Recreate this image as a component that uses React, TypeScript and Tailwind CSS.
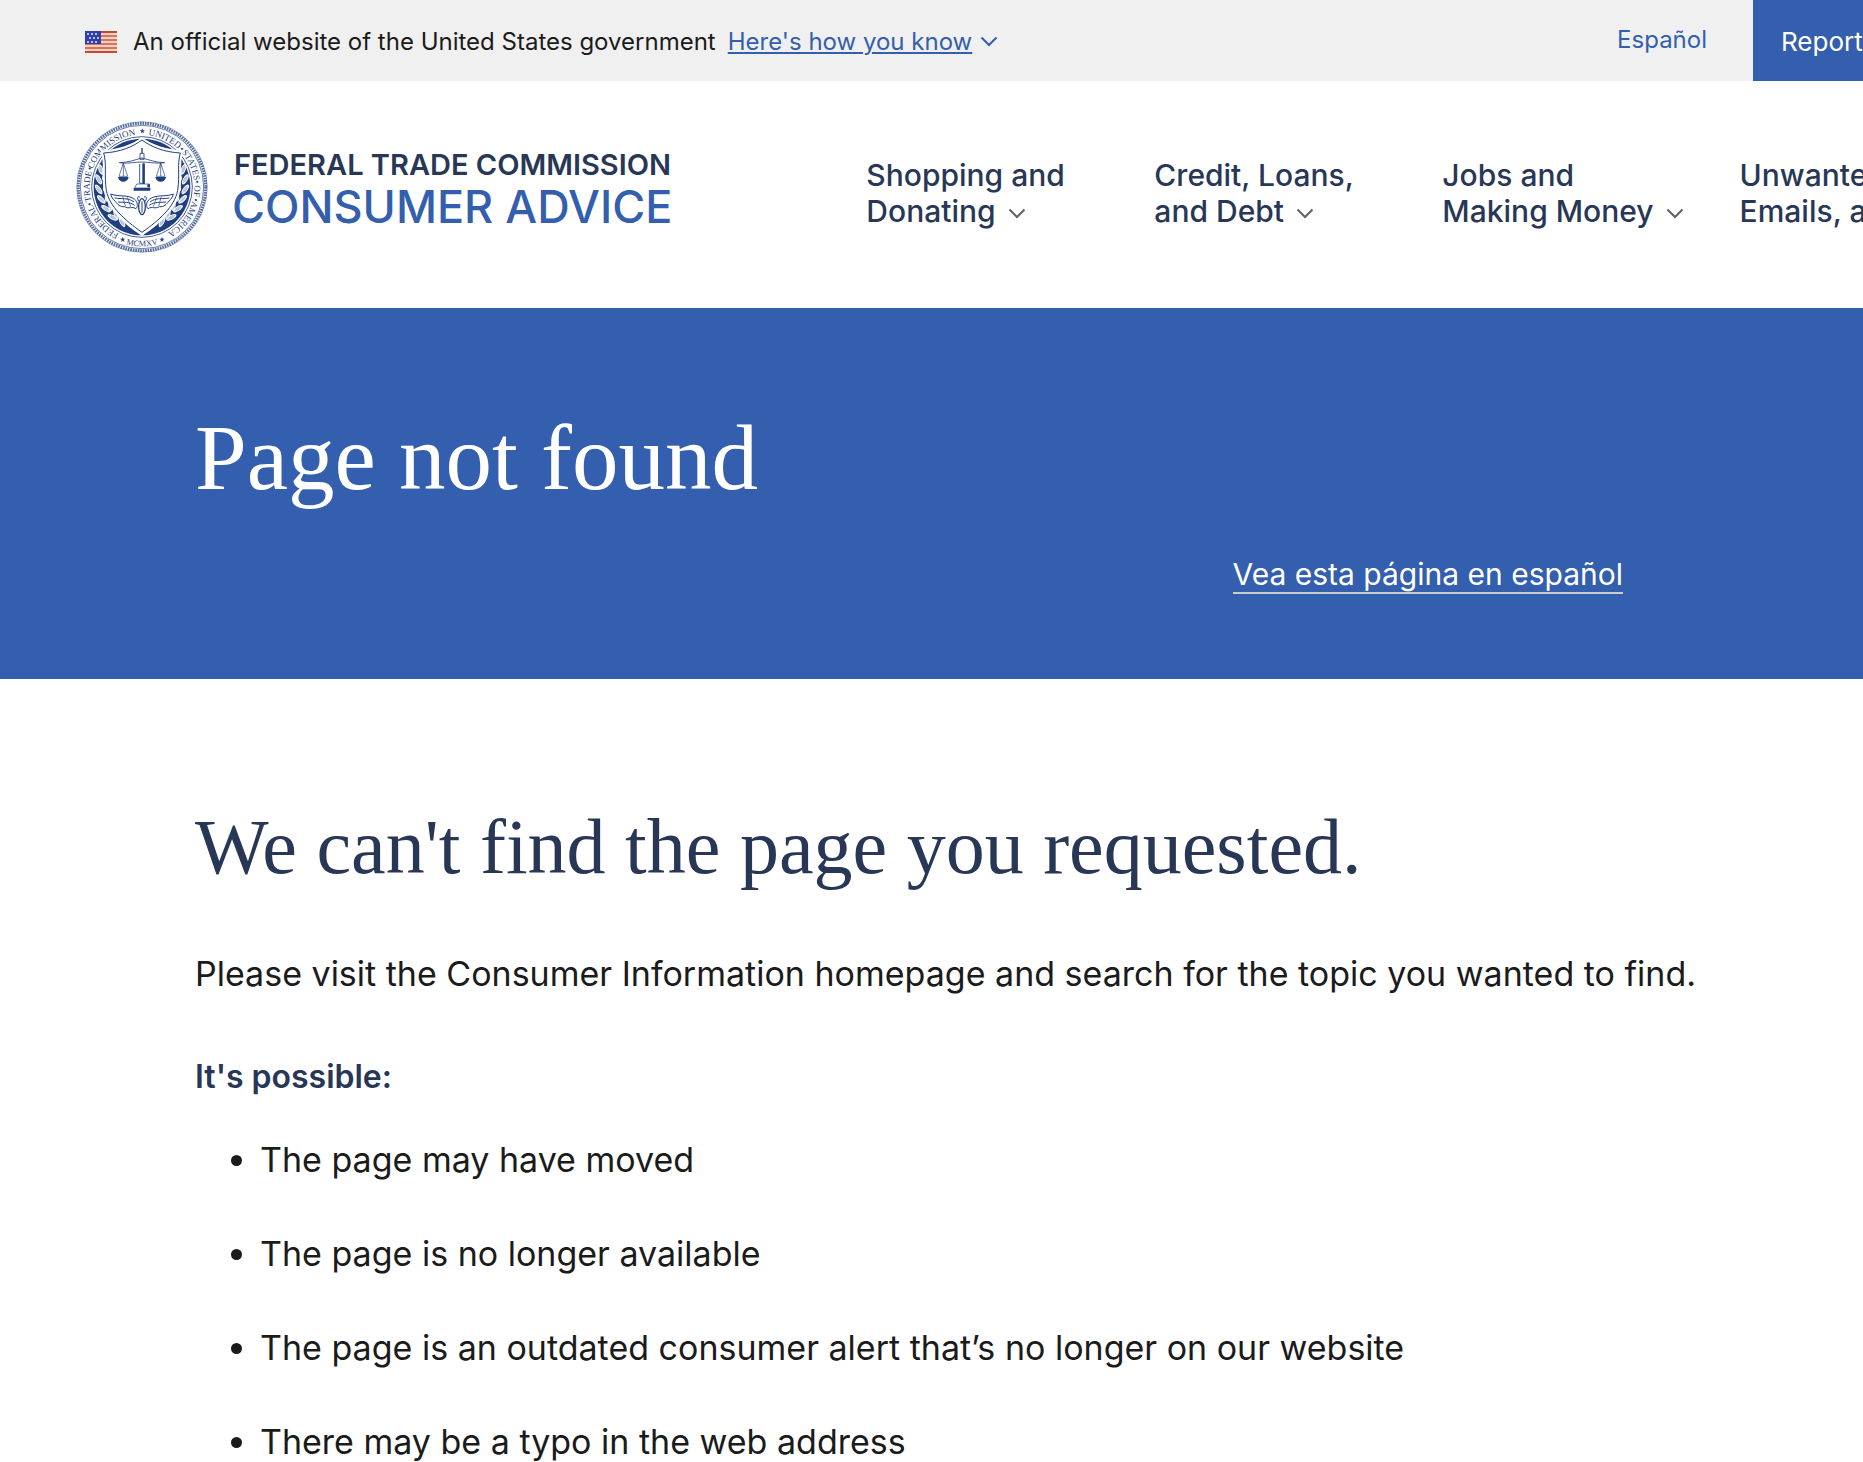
import React from "react";

const navy = "#1f3f7f";

const ringWords = [
  { text: "FEDERAL", at: "13.4%" },
  { text: "•", at: "20%" },
  { text: "TRADE", at: "25.2%" },
  { text: "•", at: "30.4%" },
  { text: "COMMISSION", at: "39.3%" },
  { text: "UNITED", at: "57%" },
  { text: "•", at: "62.9%" },
  { text: "STATES", at: "68.3%" },
  { text: "•", at: "73.5%" },
  { text: "OF", at: "76.2%" },
  { text: "•", at: "78.8%" },
  { text: "AMERICA", at: "85.6%" },
];

const leaves = [
  [92, 172, -20],
  [106, 190, 28],
  [86, 202, -30],
  [108, 222, 22],
  [86, 232, -36],
  [112, 252, 12],
  [94, 262, -46],
  [122, 280, -4],
  [108, 290, -56],
  [138, 306, -16],
  [128, 316, -62],
  [156, 330, -28],
];

function Star({ x, y }: { x: number; y: number }) {
  return (
    <path
      transform={`translate(${x} ${y})`}
      d="M0 -8L2 -2.5L8 -2.5L3 1.2L5 7L0 3.5L-5 7L-3 1.2L-8 -2.5L-2 -2.5Z"
      fill={navy}
    />
  );
}

function Laurel() {
  return (
    <g>
      {leaves.map(([x, y, r]) => (
        <g key={`${x}-${y}`} transform={`translate(${x} ${y}) rotate(${r})`}>
          <ellipse rx="7" ry="17" fill="#fff" />
          <path d="M0 -13V14M-3 -8V8M3 -8V8" stroke={navy} strokeWidth="1" />
        </g>
      ))}
      <circle cx="103" cy="146" r="3" fill="#fff" />
      <circle cx="92" cy="150" r="2" fill="#fff" />
    </g>
  );
}

function Seal() {
  return (
    <svg viewBox="18 27 396 396" className="size-33 shrink-0" role="img" aria-label="Federal Trade Commission seal">
      <defs>
        <path id="ring" d="M216 382A157 157 0 0 1 216 68A157 157 0 0 1 216 382" />
        <path id="ring-bottom" d="M38 225A178 178 0 0 0 394 225" />
      </defs>
      <circle cx="216" cy="225" r="191" fill="none" stroke={navy} strokeWidth="9" strokeDasharray="5 2.5" opacity="0.75" />
      <circle cx="216" cy="225" r="196" fill="none" stroke={navy} strokeWidth="1.5" opacity="0.7" />
      <circle cx="216" cy="225" r="185" fill="none" stroke={navy} strokeWidth="2" />
      <circle cx="216" cy="225" r="151" fill="#fff" stroke={navy} strokeWidth="2.5" />
      <circle cx="216" cy="225" r="145" fill={navy} />
      <g fill={navy} fontFamily="Liberation Serif, serif" fontSize="27" textAnchor="middle">
        {ringWords.map((w) => (
          <text key={w.at}>
            <textPath href="#ring" startOffset={w.at}>{w.text}</textPath>
          </text>
        ))}
        <text fontSize="25">
          <textPath href="#ring-bottom" startOffset="50%">MCMXV</textPath>
        </text>
      </g>
      <Star x={217} y={57} />
      <Star x={158} y={383} />
      <Star x={276} y={383} />
      <Laurel />
      <g transform="translate(432 0) scale(-1 1)">
        <Laurel />
      </g>
      <path d="M216 76C188 98 145 112 92 116C104 150 94 190 101 235C110 290 160 335 216 372C272 335 322 290 331 235C338 190 328 150 340 116C287 112 244 98 216 76Z" fill="#fff" />
      <path d="M216 84C186 106 150 120 101 123C111 155 102 190 109 235C118 284 165 325 216 361C267 325 314 284 323 235C330 190 321 155 331 123C282 120 246 106 216 84Z" fill="none" stroke={navy} strokeWidth="3" />
      <g fill="none" stroke={navy} strokeWidth="3">
        <path d="M122 246C148 256 172 246 194 262C204 270 204 284 198 290C186 282 176 292 164 284C150 286 142 276 136 268C128 262 124 254 122 246Z" />
        <path d="M310 246C284 256 260 246 238 262C228 270 228 284 234 290C246 282 256 292 268 284C282 286 290 276 296 268C304 262 308 254 310 246Z" />
        <path d="M134 258C156 262 174 256 192 270M144 270C160 272 178 268 194 280M298 258C276 262 258 256 240 270M288 270C272 272 254 268 238 280" />
        <path d="M158 254L166 282M172 256L182 284M274 254L266 282M260 256L250 284" strokeWidth="2" />
        <ellipse cx="216" cy="284" rx="10" ry="24" strokeWidth="4" />
        <path d="M216 268V302M206 268C200 258 204 250 210 256M226 268C232 258 228 250 222 256" />
      </g>
      <g stroke={navy} fill="none" strokeWidth="2.5">
        <path d="M216 108V124" strokeWidth="4" />
        <path d="M210 124H222V142H210Z" />
        <path d="M148 152C175 152 195 143 216 138C237 143 257 152 284 152C260 156 236 150 216 150C196 150 172 156 148 152Z" />
        <path d="M160 153L147 193H173ZM160 153V193M272 153L259 193H285ZM272 153V193" strokeWidth="2" />
        <path d="M209 156V214H223V156" />
      </g>
      <g fill={navy}>
        <path d="M144 195H176C174 205 168 209 160 209C152 209 146 205 144 195ZM256 195H288C286 205 280 209 272 209C264 209 258 205 256 195Z" />
        <path d="M217 154H224V216H217ZM232 217H240V226H232ZM191 228H241V236H191Z" />
      </g>
      <path d="M200 216H238V228H194Z" fill="none" stroke={navy} strokeWidth="2" />
    </svg>
  );
}

function Flag() {
  return (
    <svg viewBox="0 0 32 22" className="h-[22px] w-8 shrink-0" aria-hidden="true">
      <rect width="32" height="22" fill="#f3d0c6" />
      {[0, 4, 8, 12, 16, 20].map((y) => (
        <rect key={y} y={y} width="32" height="2" fill={y === 0 || y === 20 ? "#c64a2c" : "#d6745d"} />
      ))}
      <rect width="16" height="13" fill="#2f3fae" />
      {[3, 7, 11].map((y, row) =>
        [3, 7, 11].map((x) => (
          <rect key={`${x}-${y}`} x={x - 1 + (row === 1 ? 2 : 0)} y={y - 1} width="2" height="2" fill="#b9c0ea" />
        ))
      )}
    </svg>
  );
}

function Chevron({ className }: { className: string }) {
  return (
    <svg viewBox="0 0 18 11" className={className} fill="none" stroke="currentColor" strokeWidth="2" aria-hidden="true">
      <path d="M1.5 1.5L9 9L16.5 1.5" />
    </svg>
  );
}

const menu = [
  ["Shopping and", "Donating"],
  ["Credit, Loans,", "and Debt"],
  ["Jobs and", "Making Money"],
  ["Unwanted Calls,", "Emails, and Texts"],
];

const reasons = [
  "The page may have moved",
  "The page is no longer available",
  "The page is an outdated consumer alert that’s no longer on our website",
  "There may be a typo in the web address",
];

export default function App() {
  return (
    <div className="h-screen overflow-hidden bg-white font-['Inter',sans-serif] text-[#1b1b1b]">
      <div className="flex h-[81px] bg-[#f0f0f0] text-2xl">
        <div className="flex flex-1 items-center whitespace-nowrap pl-[85px] pt-[2px]">
          <Flag />
          <p className="ml-4">An official website of the United States government</p>
          <button type="button" className="ml-3 flex items-center gap-2 text-[#345eae]">
            <span className="underline decoration-2 underline-offset-2">Here's how you know</span>
            <Chevron className="h-[11px] w-[18px]" />
          </button>
        </div>
        <a href="#espanol" className="mr-[46px] pt-6 text-[#345eae]">Español</a>
        <a href="#report" className="flex w-[110px] items-center whitespace-nowrap bg-[#345eae] pl-7 pt-1 text-[26px] text-white">
          Report Fraud
        </a>
      </div>

      <header className="flex h-[227px] items-start pl-19 pt-10">
        <a href="#home" className="flex shrink-0 items-start gap-6">
          <Seal />
          <span className="flex flex-col pt-[26px]">
            <span className="pl-[2px] text-[29px] font-semibold leading-9 text-[#283756]">FEDERAL TRADE COMMISSION</span>
            <span className="text-[45px] font-medium leading-12 text-[#345eae]">CONSUMER ADVICE</span>
          </span>
        </a>
        <nav className="ml-[194px] flex gap-14 pt-9">
          {menu.map(([first, second]) => (
            <button
              key={first}
              type="button"
              className="min-w-[232px] shrink-0 whitespace-nowrap text-left text-[30px] font-medium leading-9 text-[#283756]"
            >
              {first}
              <span className="flex items-center gap-3">
                {second}
                <Chevron className="mt-1 h-[11px] w-[18px] text-[#5c6068]" />
              </span>
            </button>
          ))}
        </nav>
      </header>

      <section className="h-[371px] bg-[#345eae] pl-[195px] pr-[240px] pt-24 text-white">
        <h1 className="font-['Liberation_Serif',serif] text-[93px] leading-[108px]">Page not found</h1>
        <div className="mt-11 flex justify-end">
          <a href="#pagina" className="border-b-2 border-[#cccccc] text-[30px] leading-9">Vea esta página en español</a>
        </div>
      </section>

      <main className="pl-[195px] pt-[122px]">
        <h2 className="font-['Liberation_Serif',serif] text-[78px] leading-[92px] text-[#283756]">
          We can't find the page you requested.
        </h2>
        <p className="mt-14 text-[34px] leading-[50px]">
          Please visit the Consumer Information homepage and search for the topic you wanted to find.
        </p>
        <h3 className="mt-14 text-[32px] font-semibold leading-[44px] text-[#283756]">It's possible:</h3>
        <ul className="mt-9 flex list-disc flex-col gap-11 pl-[65px] text-[34px] leading-[50px]">
          {reasons.map((r) => (
            <li key={r}>{r}</li>
          ))}
        </ul>
      </main>
    </div>
  );
}
